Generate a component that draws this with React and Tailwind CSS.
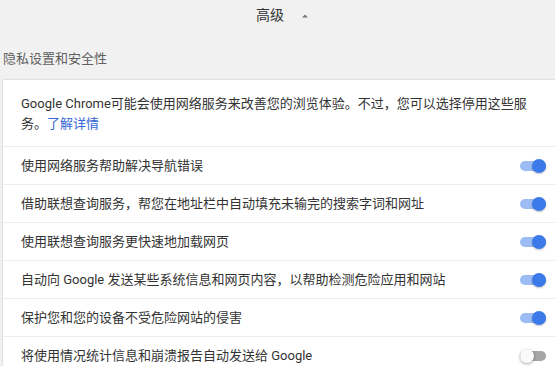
const rows = [
  { label: '使用网络服务帮助解决导航错误', on: true },
  { label: '借助联想查询服务，帮您在地址栏中自动填充未输完的搜索字词和网址', on: true },
  { label: '使用联想查询服务更快速地加载网页', on: true },
  { label: '自动向 Google 发送某些系统信息和网页内容，以帮助检测危险应用和网站', on: true },
  { label: '保护您和您的设备不受危险网站的侵害', on: true },
  { label: '将使用情况统计信息和崩溃报告自动发送给 Google', on: false },
];

function Toggle({ on }) {
  return (
    <div className="relative w-[26px] h-[14px] flex items-center">
      <div className={`w-full h-[10px] rounded-full ${on ? 'bg-[#9dbcf3]' : 'bg-[#a5a5a5]'}`} />
      <div
        className={`absolute top-0 w-[14px] h-[14px] rounded-full ${
          on ? 'right-0 bg-[#3b7ae8] shadow-[0_1px_2px_rgba(0,0,0,0.25)]' : 'left-0 bg-[#fafafa] shadow-[0_1px_3px_rgba(0,0,0,0.35)]'
        }`}
      />
    </div>
  );
}

export default function App() {
  return (
    <div
      className="h-[366px] overflow-hidden bg-[#f1f1f1] text-[13px] text-[#333]"
      style={{ fontFamily: 'Roboto, "Noto Sans CJK SC", sans-serif' }}
    >
      <div className="h-[31px] flex items-center justify-center pl-[10px]">
        <span className="text-[14px] text-[#333]">高级</span>
        <svg width="8" height="5" viewBox="0 0 8 5" className="ml-[17px]">
          <path d="M1 4.5 L4 1.5 L7 4.5 Z" fill="#777" />
        </svg>
      </div>
      <div className="h-[49px] flex items-center pl-[3px] pt-[7px] text-[#5f5f5f]">隐私设置和安全性</div>
      <div className="ml-[3px] bg-white shadow-[0_0_2px_rgba(0,0,0,0.2)]">
        <div className="pl-[18px] pr-[24px] pt-[14px] pb-[12px] leading-[20px] border-b border-[#ececec]">
          Google Chrome可能会使用网络服务来改善您的浏览体验。不过，您可以选择停用这些服务。
          <span className="text-[#3367d6]">了解详情</span>
        </div>
        {rows.map((r, i) => (
          <div
            key={i}
            className={`h-[38px] flex items-center justify-between pl-[18px] pr-[9px] ${
              i < rows.length - 1 ? 'border-b border-[#ececec]' : ''
            }`}
          >
            <span>{r.label}</span>
            <Toggle on={r.on} />
          </div>
        ))}
      </div>
    </div>
  );
}
